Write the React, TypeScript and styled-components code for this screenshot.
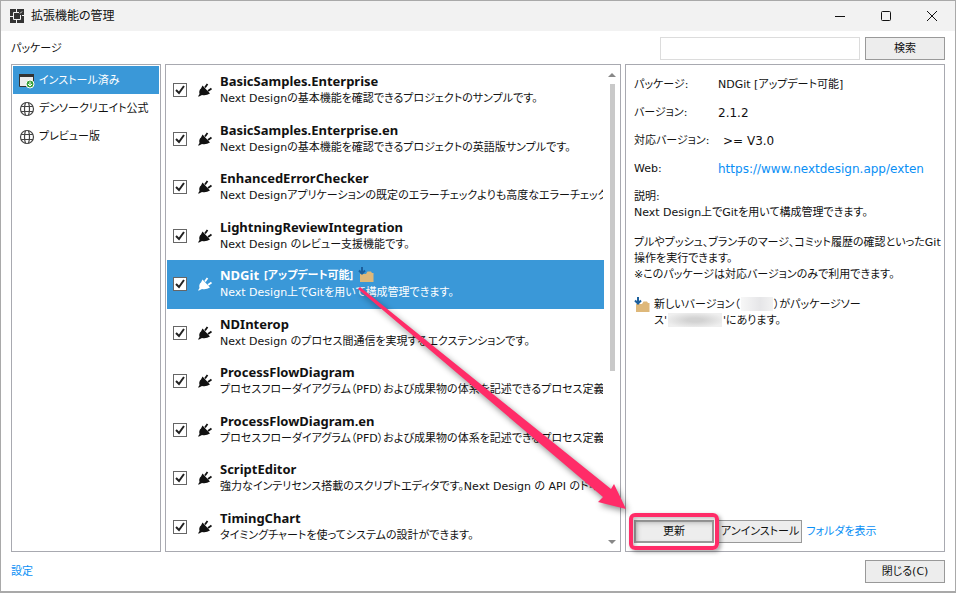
import React from "react";
import styled, { createGlobalStyle, css } from "styled-components";

const Global = createGlobalStyle`
  * { box-sizing: border-box; }
  html, body, #root { height: 100%; margin: 0; }
  body, button, input {
    font: 11px/16px "DejaVu Sans", "Noto Sans CJK JP", sans-serif;
    font-feature-settings: "palt";
    color: #111;
  }
`;

const Window = styled.div`
  position: relative;
  height: 100vh;
  display: flex;
  flex-direction: column;
  overflow: hidden;
  background: #fff;
  border: 1px solid #a9a9a9;
  border-bottom-width: 2px;
`;

const TitleBar = styled.header`
  height: 30px;
  flex: none;
  display: flex;
  align-items: center;
  gap: 6px;
  padding-left: 8px;
  background: #f2f2f2;
`;

const Title = styled.h1`
  margin: 0;
  flex: 1;
  font-size: 12px;
  font-weight: 400;
`;

const CaptionButtons = styled.div`
  display: flex;
`;

const CaptionButton = styled.button`
  width: 46px;
  height: 30px;
  padding: 0;
  border: 0;
  background: none;
  display: grid;
  place-items: center;
`;

const SearchRow = styled.div`
  flex: none;
  display: flex;
  align-items: center;
  gap: 5px;
  padding: 6px 10px 4px;
`;

const SearchLabel = styled.label`
  flex: 1;
`;

const SearchInput = styled.input`
  width: 200px;
  height: 23px;
  border: 1px solid #dcdcdc;
  background: #fff;
`;

const Button = styled.button<{ $fit?: boolean }>`
  width: ${(p) => (p.$fit ? "auto" : "80px")};
  height: 23px;
  flex: none;
  padding: 1px 2px 0;
  border: 1px solid #999;
  background: #ededed;
  white-space: nowrap;
`;

const Link = styled.a`
  color: #0a8ff5;
  text-decoration: none;
  white-space: nowrap;
`;

const Columns = styled.main`
  flex: 1;
  min-height: 0;
  display: grid;
  grid-template-columns: 150px minmax(0, 456fr) minmax(0, 320fr);
  gap: 4px;
  padding: 0 10px;
`;

const Panel = styled.section`
  min-height: 0;
  border: 1px solid #a8a9b0;
`;

const Sources = styled(Panel)`
  padding: 1px;
  display: flex;
  flex-direction: column;
`;

const SourceButton = styled.button<{ $active?: boolean }>`
  height: 28px;
  display: flex;
  align-items: center;
  gap: 4px;
  padding: 2px 0 0 6px;
  border: 0;
  white-space: nowrap;
  background: ${(p) => (p.$active ? "#3a98d8" : "transparent")};
  color: ${(p) => (p.$active ? "#fff" : "#111")};
`;

const ListPanel = styled(Panel)`
  display: flex;
`;

const PackageList = styled.ul`
  flex: 1;
  min-width: 0;
  margin: 0;
  padding: 1px 0 0 1px;
  list-style: none;
  display: grid;
  grid-template-columns: minmax(0, 1fr);
  grid-template-rows: repeat(10, 1fr);
`;

const PackageRow = styled.li<{ $active?: boolean }>`
  display: flex;
  align-items: center;
  padding: 0 1px 0 6px;
  ${(p) =>
    p.$active &&
    css`
      background: #3a98d8;
      color: #fff;
    `}
`;

const Tick = styled.input`
  appearance: none;
  width: 14px;
  height: 14px;
  flex: none;
  margin: 0 10px 0 0;
  border: 1px solid #666;
  background: #fff;
  &:checked {
    background: #fff
      url("data:image/svg+xml,%3Csvg xmlns='http://www.w3.org/2000/svg' viewBox='0 0 12 12'%3E%3Cpath d='M2 6l3 3 5-7' fill='none' stroke='%23222' stroke-width='2'/%3E%3C/svg%3E");
  }
`;

const PackageText = styled.label`
  flex: 1;
  min-width: 0;
  overflow: hidden;
  white-space: nowrap;
  padding-left: 7px;
`;

const PackageName = styled.strong`
  display: flex;
  align-items: flex-start;
  gap: 5px;
  height: 18px;
  font-family: "Noto Sans", "Noto Sans CJK JP", sans-serif;
  font-size: 13px;
  font-weight: 700;
`;

const NameTag = styled.span`
  font-size: 11px;
`;

const Summary = styled.span`
  display: block;
`;

const ScrollTrack = styled.div`
  width: 16px;
  flex: none;
  display: flex;
  flex-direction: column;
  align-items: center;
  padding: 8px 0 7px;
`;

const Thumb = styled.div`
  width: 5px;
  height: 61%;
  margin: 7px 0 auto;
  background: #c9c9c9;
`;

const Details = styled(Panel)`
  display: flex;
  flex-direction: column;
  padding: 6px 0 8px 8px;
`;

const Facts = styled.dl`
  margin: 0;
  display: grid;
  grid-template-columns: 84px minmax(0, 1fr);
  grid-auto-rows: 28px;
  align-items: center;
  white-space: nowrap;
`;

const Value = styled.dd<{ $latin?: boolean }>`
  margin: 0;
  font-size: ${(p) => (p.$latin ? "12px" : "11px")};
`;

const IndentedValue = styled(Value)`
  padding-left: 5px;
`;

const Description = styled.div`
  padding-top: 6px;
  white-space: pre-line;
`;

const Paragraph = styled.p`
  margin: 0 0 14px;
`;

const Notice = styled.div`
  display: flex;
  align-items: flex-start;
  gap: 4px;
`;

const NoticeText = styled.p`
  margin: 0;
`;

const Redacted = styled.span<{ $wide?: boolean }>`
  display: inline-block;
  width: ${(p) => (p.$wide ? "54px" : "32px")};
  height: 14px;
  margin: 0 1px;
  vertical-align: top;
  background: ${(p) =>
    p.$wide
      ? "radial-gradient(ellipse, #d2d2d2 20%, #efefef 80%)"
      : "linear-gradient(90deg, #f7f7f7, #e6e6e8 60%, #f2f2f2)"};
`;

const Actions = styled.div`
  margin-top: auto;
  display: flex;
  align-items: center;
  gap: 4px;
`;

const UpdateHolder = styled.div`
  position: relative;
  display: flex;
`;

const UpdateButton = styled(Button)`
  box-shadow: inset 0 0 0 1px #999, inset 2px 2px 5px #bbb;
`;

const Highlight = styled.span`
  position: absolute;
  inset: -7px -5px;
  border: 4px solid #ff2c68;
  border-radius: 6px;
  box-shadow: 2px 2px 4px rgba(0, 0, 0, 0.35), inset 2px 2px 4px rgba(0, 0, 0, 0.25);
  pointer-events: none;
`;

const Arrow = styled.svg`
  position: absolute;
  right: 100%;
  bottom: 100%;
  width: 280px;
  height: 240px;
  filter: drop-shadow(2px 3px 3px rgba(0, 0, 0, 0.45));
  pointer-events: none;
`;

const Footer = styled.footer`
  height: 39px;
  flex: none;
  display: flex;
  align-items: center;
  justify-content: space-between;
  padding: 0 10px;
`;

const AppIcon = () => (
  <svg width="16" height="16" viewBox="0 0 16 16" aria-hidden="true">
    <path fill="#333" d="M1 1h14v14H1z" />
    <path fill="none" stroke="#f2f2f2" d="M7.500 1v3M1 8.500h3M7.500 12v3M10 4.500H4.500v7h7V7M11 5.500l2-2M15 7.500h-2" />
  </svg>
);

const InstalledIcon = () => (
  <svg width="16" height="16" viewBox="0 0 16 16" aria-hidden="true">
    <path fill="#ececec" stroke="#333" d="M.5 1.500h14v12H.5z" />
    <path fill="#333" d="M0 1h15v3H0z" />
    <circle cx="11" cy="11" r="4" fill="#38a038" stroke="#fff" />
    <path fill="none" stroke="#fff" d="M11 8.500v4.500M9 11l2 2 2-2" />
  </svg>
);

const GlobeIcon = () => (
  <svg width="16" height="16" viewBox="0 0 16 16" fill="none" stroke="#444" strokeWidth="1.200" aria-hidden="true">
    <circle cx="8" cy="8" r="6.500" />
    <path d="M2 5.500h12M2 10.500h12M6.500 1.500q-2 6.500 0 13M9.500 1.500q2 6.500 0 13" />
  </svg>
);

const PlugIcon = () => (
  <svg width="16" height="16" viewBox="0 0 16 16" fill="currentColor" aria-hidden="true">
    <path d="M1 14.500l1.500-2.500Q1.500 8.500 4 6.500L5.500 3.500l7.500 8q-4 2.500-8 1.500l-3 1.500z" />
    <path fill="none" stroke="currentColor" strokeWidth="1.800" d="M8 5.500l2.500-3.500M11 9l3.500-2.500" />
  </svg>
);

const UpdateIcon = () => (
  <svg width="16" height="16" viewBox="0 0 16 16" aria-hidden="true">
    <path fill="#deb87a" d="M2 7h6l1.500-2.500H13L14 6h1.500v9H2z" />
    <path fill="none" stroke="#1c5f9c" strokeWidth="2" d="M4 0v6M1 3.500l3 3 3-3" />
  </svg>
);

const sources = [
  { name: "インストール済み", icon: <InstalledIcon />, active: true },
  { name: "デンソークリエイト公式", icon: <GlobeIcon /> },
  { name: "プレビュー版", icon: <GlobeIcon /> },
];

const packages = [
  { name: "BasicSamples.Enterprise", summary: "Next Designの基本機能を確認できるプロジェクトのサンプルです。" },
  { name: "BasicSamples.Enterprise.en", summary: "Next Designの基本機能を確認できるプロジェクトの英語版サンプルです。" },
  { name: "EnhancedErrorChecker", summary: "Next Designアプリケーションの既定のエラーチェックよりも高度なエラーチェック機能" },
  { name: "LightningReviewIntegration", summary: "Next Design のレビュー支援機能です。" },
  { name: "NDGit", tag: "[アップデート可能]", summary: "Next Design上でGitを用いて構成管理できます。", active: true },
  { name: "NDInterop", summary: "Next Design のプロセス間通信を実現するエクステンションです。" },
  { name: "ProcessFlowDiagram", summary: "プロセスフローダイアグラム（PFD）および成果物の体系を記述できるプロセス定義" },
  { name: "ProcessFlowDiagram.en", summary: "プロセスフローダイアグラム（PFD）および成果物の体系を記述できるプロセス定義" },
  { name: "ScriptEditor", summary: "強力なインテリセンス搭載のスクリプトエディタです。Next Design の API のドキ" },
  { name: "TimingChart", summary: "タイミングチャートを使ってシステムの設計ができます。" },
];

export default function App() {
  return (
    <>
      <Global />
      <Window>
        <TitleBar>
          <AppIcon />
          <Title>拡張機能の管理</Title>
          <CaptionButtons>
            <CaptionButton aria-label="最小化">
              <svg width="12" height="12" fill="none" stroke="#111"><path d="M1 6.500h10" /></svg>
            </CaptionButton>
            <CaptionButton aria-label="最大化">
              <svg width="12" height="12" fill="none" stroke="#111"><rect x="1.500" y="1.500" width="9" height="9" rx="1" /></svg>
            </CaptionButton>
            <CaptionButton aria-label="閉じる">
              <svg width="12" height="12" fill="none" stroke="#111"><path d="M1 1l10 10M11 1L1 11" /></svg>
            </CaptionButton>
          </CaptionButtons>
        </TitleBar>
        <SearchRow>
          <SearchLabel htmlFor="search">パッケージ</SearchLabel>
          <SearchInput id="search" />
          <Button>検索</Button>
        </SearchRow>
        <Columns>
          <Sources>
            {sources.map((s) => (
              <SourceButton key={s.name} $active={s.active}>{s.icon}{s.name}</SourceButton>
            ))}
          </Sources>
          <ListPanel>
            <PackageList>
              {packages.map((p) => (
                <PackageRow key={p.name} $active={p.active}>
                  <Tick type="checkbox" id={p.name} defaultChecked />
                  <PlugIcon />
                  <PackageText htmlFor={p.name}>
                    <PackageName>
                      {p.name}
                      {p.tag && <NameTag>{p.tag}</NameTag>}
                      {p.active && <UpdateIcon />}
                    </PackageName>
                    <Summary>{p.summary}</Summary>
                  </PackageText>
                </PackageRow>
              ))}
            </PackageList>
            <ScrollTrack>
              <svg width="8" height="4" fill="#888" aria-hidden="true"><path d="M0 4l4-4 4 4z" /></svg>
              <Thumb />
              <svg width="8" height="4" fill="#888" aria-hidden="true"><path d="M0 0l4 4 4-4z" /></svg>
            </ScrollTrack>
          </ListPanel>
          <Details>
            <Facts>
              <dt>パッケージ:</dt><Value>NDGit [アップデート可能]</Value>
              <dt>バージョン:</dt><Value $latin>2.1.2</Value>
              <dt>対応バージョン:</dt><IndentedValue $latin>&gt;= V3.0</IndentedValue>
              <dt>Web:</dt><Value $latin><Link href="#web">https://www.nextdesign.app/exten</Link></Value>
            </Facts>
            <Description>
              <Paragraph>{"説明:\nNext Design上でGitを用いて構成管理できます。"}</Paragraph>
              <Paragraph>{"プルやプッシュ、ブランチのマージ、コミット履歴の確認といったGit\n操作を実行できます。\n※このパッケージは対応バージョンのみで利用できます。"}</Paragraph>
            </Description>
            <Notice>
              <UpdateIcon />
              <NoticeText>新しいバージョン（<Redacted />）がパッケージソー<br />ス'<Redacted $wide />'にあります。</NoticeText>
            </Notice>
            <Actions>
              <UpdateHolder>
                <UpdateButton>更新</UpdateButton>
                <Highlight />
                <Arrow viewBox="0 0 280 240" aria-hidden="true">
                  <path fill="#ff2c68" d="M4 9L6 7L257 209L260 204L272 229L244 222L249 217Z" />
                </Arrow>
              </UpdateHolder>
              <Button $fit>アンインストール</Button>
              <Link href="#folder">フォルダを表示</Link>
            </Actions>
          </Details>
        </Columns>
        <Footer><Link href="#settings">設定</Link><Button>閉じる(C)</Button></Footer>
      </Window>
    </>
  );
}
